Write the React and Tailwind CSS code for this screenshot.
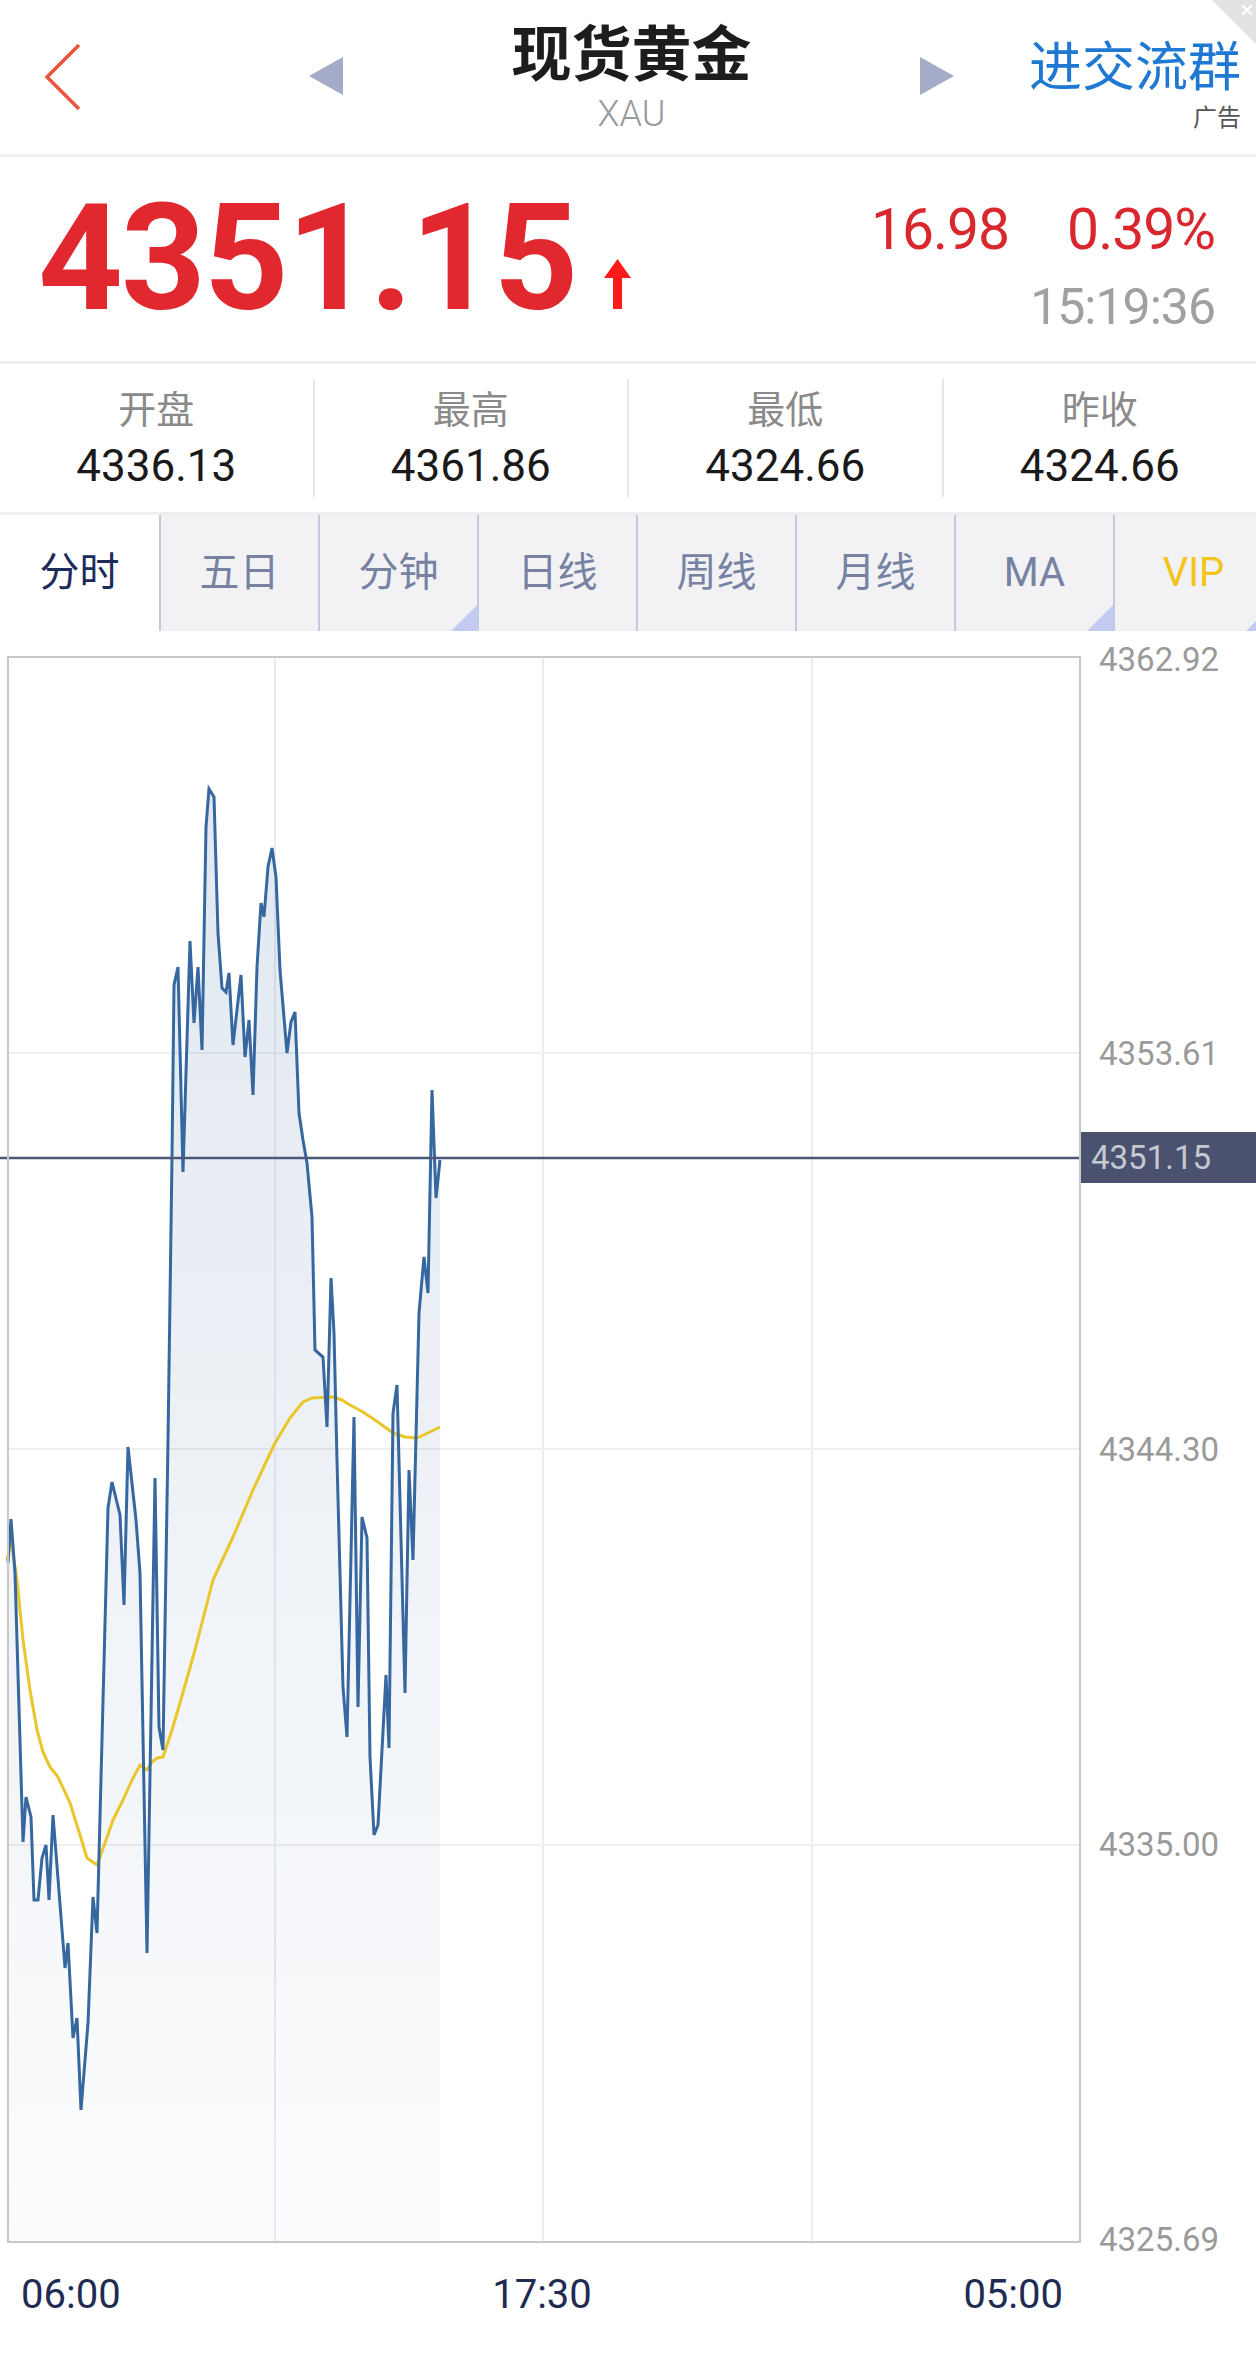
import React from 'react';

const OFF = 656;

const priceLine = [
  [8, 1563], [11, 1519], [15, 1573], [23, 1842], [26, 1797], [31, 1817], [34, 1900], [38, 1900],
  [42, 1858], [46, 1845], [49, 1900], [53, 1815], [65, 1968], [68, 1943], [73, 2038], [77, 2018],
  [81, 2110], [88, 2023], [93, 1897], [97, 1933], [108, 1508], [112, 1482], [120, 1515], [124, 1605],
  [128, 1447], [136, 1520], [140, 1573], [147, 1953], [155, 1478], [159, 1727], [163, 1750], [168, 1440],
  [172, 1157], [174, 985], [178, 967], [183, 1172], [190, 941], [194, 1023], [198, 967], [202, 1050],
  [206, 827], [209, 789], [214, 797], [218, 933], [222, 988], [226, 992], [229, 973], [233, 1045],
  [241, 975], [245, 1057], [249, 1020], [253, 1095], [257, 967], [261, 903], [264, 917], [268, 867],
  [272, 848], [276, 877], [280, 970], [287, 1053], [291, 1022], [295, 1012], [299, 1113], [303, 1140],
  [307, 1163], [312, 1217], [315, 1350], [323, 1357], [327, 1427], [331, 1278], [334, 1333], [337, 1460],
  [343, 1687], [347, 1737], [354, 1417], [358, 1707], [362, 1517], [367, 1538], [370, 1757], [374, 1835],
  [378, 1825], [386, 1675], [389, 1748], [393, 1413], [397, 1385], [405, 1693], [409, 1470], [413, 1560],
  [419, 1313], [424, 1257], [428, 1293], [432, 1090], [436, 1198], [440, 1160],
];

const avgLine = [
  [7, 1560], [11, 1540], [17, 1580], [23, 1640], [30, 1690], [37, 1730], [43, 1752], [50, 1767],
  [58, 1777], [70, 1803], [80, 1835], [87, 1858], [97, 1865], [105, 1843], [113, 1820], [123, 1800],
  [132, 1780], [140, 1765], [147, 1770], [152, 1762], [157, 1758], [163, 1757], [172, 1730], [180, 1703],
  [195, 1650], [213, 1580], [233, 1537], [253, 1490], [267, 1460], [275, 1443], [290, 1418], [303, 1402],
  [312, 1398], [333, 1397], [342, 1400], [350, 1405], [363, 1412], [375, 1420], [393, 1433], [405, 1437],
  [417, 1438], [430, 1432], [440, 1427],
];

const toPts = (arr) => arr.map(([x, y]) => `${x},${y - OFF}`).join(' ');

const stats = [
  { label: '开盘', value: '4336.13' },
  { label: '最高', value: '4361.86' },
  { label: '最低', value: '4324.66' },
  { label: '昨收', value: '4324.66' },
];

const tabs = [
  { name: '分时', active: true },
  { name: '五日' },
  { name: '分钟', corner: true },
  { name: '日线' },
  { name: '周线' },
  { name: '月线' },
  { name: 'MA', corner: true },
  { name: 'VIP', corner: true, vip: true },
];

const axisLabels = [
  { top: 4, text: '4362.92' },
  { top: 398, text: '4353.61' },
  { top: 794, text: '4344.30' },
  { top: 1189, text: '4335.00' },
  { top: 1584, text: '4325.69' },
];

function Header() {
  return (
    <div className="relative flex h-[157px] border-b-[3px] border-[#efefef] bg-white">
      {/* back */}
      <div className="pl-[42px] pt-[42px]">
        <svg width="41" height="70" viewBox="0 0 41 70">
          <polyline points="37,3 5,35 37,67" fill="none" stroke="#e8553e" strokeWidth="3.5" />
        </svg>
      </div>
      <div className="ml-[226px] pt-[57px]">
        <svg width="34" height="38" viewBox="0 0 34 38">
          <polygon points="0,19 34,0 34,38" fill="#a3abc6" />
        </svg>
      </div>
      <div className="flex flex-1 flex-col items-center pt-[24px]">
        <div className="text-[60px] font-bold leading-[64px] text-[#1d1d1d]">现货黄金</div>
        <div className="mt-[6px] text-[36px] font-light leading-[40px] text-[#9a9a9a]">XAU</div>
      </div>
      <div className="pt-[57px]">
        <svg width="34" height="38" viewBox="0 0 34 38">
          <polygon points="34,19 0,0 0,38" fill="#a3abc6" />
        </svg>
      </div>
      <div className="ml-[75px] flex flex-col items-end pr-[15px] pt-[38px]">
        <div className="text-[53px] leading-[60px] text-[#1f78d1]">进交流群</div>
        <div className="mt-[6px] text-[24px] leading-[28px] text-[#555]">广告</div>
      </div>
      {/* ad close corner */}
      <svg className="absolute right-0 top-0" width="44" height="44" viewBox="0 0 44 44">
        <polygon points="0,0 44,0 44,44" fill="#e2e2e2" />
        <line x1="30" y1="5" x2="40" y2="15" stroke="#fff" strokeWidth="2" />
        <line x1="40" y1="5" x2="30" y2="15" stroke="#fff" strokeWidth="2" />
      </svg>
    </div>
  );
}

function PriceRow() {
  return (
    <div className="flex h-[207px] items-center justify-between border-b-[3px] border-[#efefef] pl-[38px] pr-[41px]">
      <div className="flex items-end">
        <div className="text-[148px] font-bold leading-[150px] tracking-[-2px] text-[#e0282e]">4351.15</div>
        <svg className="mb-[25px] ml-[28px]" width="27" height="50" viewBox="0 0 27 50">
          <polygon points="0,19 13.5,0 27,19" fill="#ff1a1a" />
          <rect x="9" y="17" width="9" height="33" fill="#ff1a1a" />
        </svg>
      </div>
      <div className="flex flex-col items-end pt-[18px]">
        <div className="flex gap-[58px] text-[57px] leading-[60px] tracking-[-1px] text-[#d9272e]">
          <span>16.98</span>
          <span>0.39%</span>
        </div>
        <div className="mt-[18px] text-[50px] leading-[58px] tracking-[-1px] text-[#a0a0a0]">15:19:36</div>
      </div>
    </div>
  );
}

function StatsRow() {
  return (
    <div className="flex h-[151px] items-center border-b-[3px] border-[#efefef]">
      {stats.map((s, i) => (
        <React.Fragment key={s.label}>
          {i > 0 && <div className="h-[118px] w-[2px] bg-[#e6e6e6]" />}
          <div className="flex flex-1 flex-col items-center">
            <div className="text-[38px] leading-[48px] text-[#8a8a8a]">{s.label}</div>
            <div className="mt-[7px] text-[44px] leading-[50px] text-[#1a1a1a]">{s.value}</div>
          </div>
        </React.Fragment>
      ))}
    </div>
  );
}

function Tabs() {
  return (
    <div className="flex h-[116px] overflow-hidden bg-[#f2f2f4]">
      {tabs.map((t, i) => (
        <div
          key={t.name}
          className={`relative flex h-full w-[159px] shrink-0 items-center justify-center ${i > 0 ? 'border-l-2 border-[#c3cae0]' : ''} ${t.active ? 'bg-white' : ''}`}
        >
          <span className={`text-[40px] ${t.active ? 'text-[#1c2b5a]' : t.vip ? 'text-[#f2c41c]' : 'text-[#7782a3]'}`}>
            {t.name}
          </span>
          {t.corner && (
            <svg className="absolute bottom-0 right-0" width="26" height="26" viewBox="0 0 26 26">
              <polygon points="26,0 26,26 0,26" fill="#c3cbf0" />
            </svg>
          )}
        </div>
      ))}
    </div>
  );
}

function Chart() {
  return (
    <div className="flex pt-[25px]">
      <svg width="1081" height="1588" viewBox="0 0 1081 1588" className="shrink-0">
        <defs>
          <linearGradient id="area" x1="0" y1="130" x2="0" y2="1586" gradientUnits="userSpaceOnUse">
            <stop offset="0" stopColor="#3b679e" stopOpacity="0.15" />
            <stop offset="1" stopColor="#3b679e" stopOpacity="0.02" />
          </linearGradient>
        </defs>
        {/* grid */}
        {[275, 543, 812].map((x) => (
          <line key={x} x1={x} y1="1" x2={x} y2="1586" stroke="#ececf0" strokeWidth="2" />
        ))}
        {[397, 793, 1189].map((y) => (
          <line key={y} x1="8" y1={y} x2="1080" y2={y} stroke="#efefef" strokeWidth="2" />
        ))}
        <polygon points={`${toPts(priceLine)} 440,1586 8,1586`} fill="url(#area)" />
        <polyline points={toPts(avgLine)} fill="none" stroke="#e9c62c" strokeWidth="3" strokeLinejoin="round" />
        <polyline points={toPts(priceLine)} fill="none" stroke="#37679f" strokeWidth="3" strokeLinejoin="miter" />
        <line x1="0" y1="502" x2="1081" y2="502" stroke="#4c5878" strokeWidth="2.5" />
        <rect x="8" y="1" width="1072" height="1585" fill="none" stroke="#c8c8c8" strokeWidth="2" />
      </svg>
      <div className="relative h-[1588px] flex-1">
        {axisLabels.map((a) => (
          <div
            key={a.text}
            className="absolute left-[18px] text-[33px] leading-[40px] text-[#9a9a9a]"
            style={{ top: a.top - 20 }}
          >
            {a.text}
          </div>
        ))}
        <div className="absolute left-0 right-0 top-[476px] flex h-[51px] items-center bg-[#4a5270] pl-[10px] text-[33px] text-[#c6c8d2]">
          4351.15
        </div>
      </div>
    </div>
  );
}

export default function App() {
  return (
    <div className="h-[2367px] w-[1256px] overflow-hidden bg-white font-['Roboto','Noto_Sans_CJK_SC',sans-serif]">
      <Header />
      <PriceRow />
      <StatsRow />
      <Tabs />
      <Chart />
      <div className="flex h-[102px] w-[1063px] items-center justify-between pl-[21px] text-[40px] text-[#1f2b52]">
        <span>06:00</span>
        <span>17:30</span>
        <span>05:00</span>
      </div>
    </div>
  );
}
